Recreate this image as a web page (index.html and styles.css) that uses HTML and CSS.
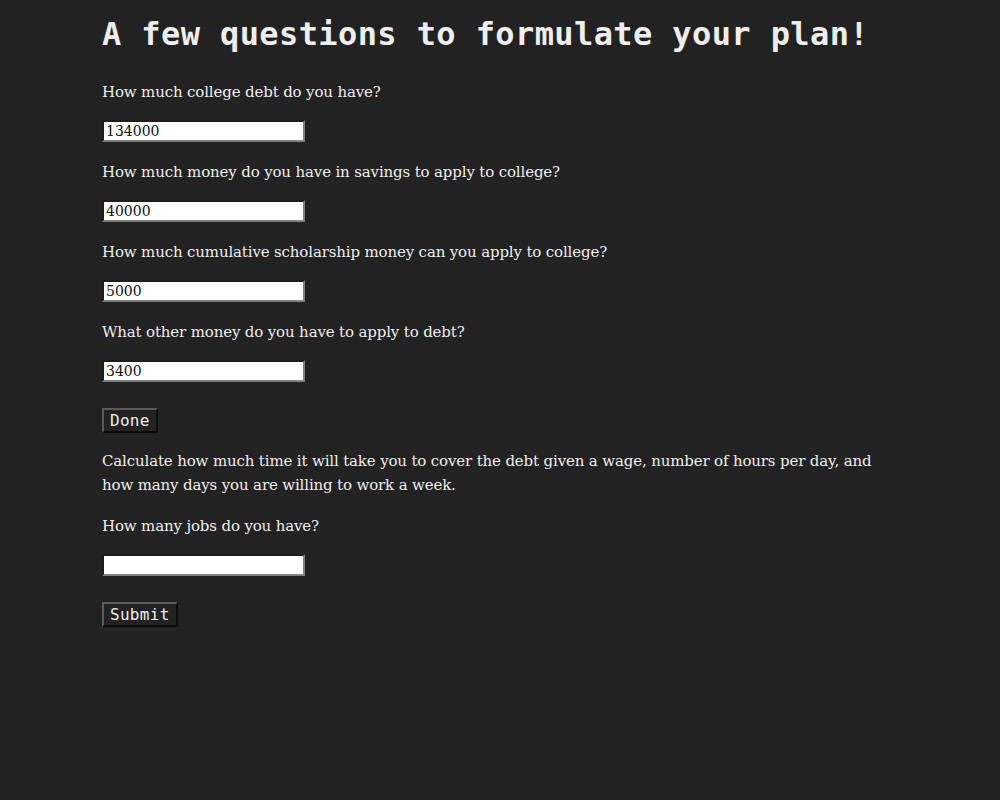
FILE: index.html
```html
<!DOCTYPE html>
<html lang="en">
<head>
<meta charset="utf-8">
<title>Plan</title>
<link rel="stylesheet" href="styles.css">
</head>
<body>
<main class="page">
  <h1 class="title">A few questions to formulate your plan!</h1>
  <form class="form">
    <p class="label">How much college debt do you have?</p>
    <input class="field" type="text" value="134000">
    <p class="label">How much money do you have in savings to apply to college?</p>
    <input class="field" type="text" value="40000">
    <p class="label">How much cumulative scholarship money can you apply to college?</p>
    <input class="field" type="text" value="5000">
    <p class="label">What other money do you have to apply to debt?</p>
    <input class="field" type="text" value="3400">
    <button class="btn" type="button">Done</button>
    <p class="text">Calculate how much time it will take you to cover the debt given a wage, number of hours per day, and how many days you are willing to work a week.</p>
    <p class="label">How many jobs do you have?</p>
    <input class="field" type="text" value="">
    <button class="btn" type="button">Submit</button>
  </form>
</main>
</body>
</html>
```
FILE: styles.css
```css
html, body {
  margin: 0;
  padding: 0;
  background: #222222;
}
body {
  color: #eeeeee;
  font-family: "DejaVu Serif", serif;
  font-size: 15px;
  letter-spacing: -0.15px;
  min-height: 800px;
}
.page {
  width: 800px;
  margin: 0 auto;
  padding: 14px 0 0 2px;
  box-sizing: border-box;
}
.title {
  margin: 0;
  font-family: "DejaVu Sans Mono", monospace;
  font-size: 32px;
  letter-spacing: 0.4px;
  line-height: 40px;
  font-weight: bold;
  color: #eeeeee;
}
.form {
  display: flex;
  flex-direction: column;
  align-items: flex-start;
  padding-top: 26px;
}
.label, .text {
  margin: 0;
  line-height: 24px;
}
.text {
  margin-bottom: 17px;
}
.field {
  margin: 16px 0 18px;
  width: 203px;
  height: 22px;
  box-sizing: border-box;
  padding: 1px 2px;
  border-style: solid;
  border-width: 2px;
  border-color: #1c1c1c #808080 #808080 #1c1c1c;
  background: #ffffff;
  color: #111111;
  font-family: "DejaVu Serif", serif;
  font-size: 14px;
  letter-spacing: 0;
  line-height: 16px;
}
.btn {
  margin: 8px 0 16px;
  height: 25px;
  box-sizing: border-box;
  padding: 1px 6px;
  border-style: solid;
  border-width: 2px;
  border-color: #5a5a5a #0a0a0a #0a0a0a #5a5a5a;
  background: #222222;
  color: #eeeeee;
  font-family: "DejaVu Sans Mono", monospace;
  font-size: 16px;
  letter-spacing: 0.3px;
  line-height: 19px;
}
```
